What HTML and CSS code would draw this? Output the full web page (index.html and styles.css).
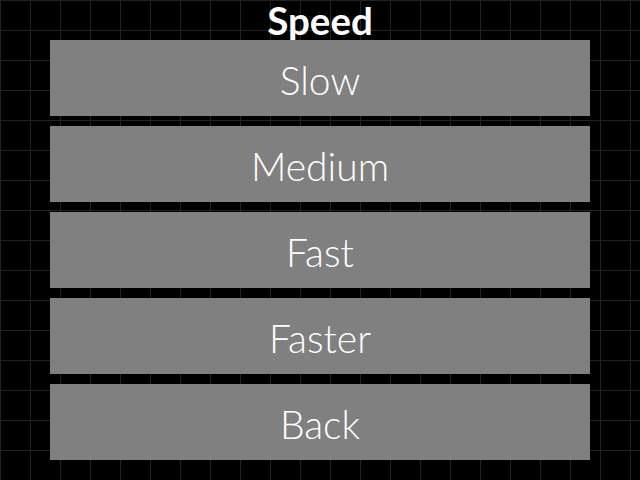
FILE: index.html
```html
<!DOCTYPE html>
<html>
<head>
<meta charset="utf-8">
<link rel="stylesheet" href="styles.css">
</head>
<body>
<div class="screen">
  <h1 class="title">Speed</h1>
  <div class="menu">
    <div class="item">Slow</div>
    <div class="item">Medium</div>
    <div class="item">Fast</div>
    <div class="item">Faster</div>
    <div class="item">Back</div>
  </div>
</div>
</body>
</html>
```
FILE: styles.css
```css
html, body {
  margin: 0;
  padding: 0;
}
body {
  width: 640px;
  height: 480px;
  overflow: hidden;
  background-color: #000;
  background-image:
    linear-gradient(#232323 1px, transparent 1px),
    linear-gradient(90deg, #232323 1px, transparent 1px);
  background-size: 30px 30px;
  font-family: "Lato", "Open Sans", sans-serif;
  color: #fff;
}
.screen {
  display: flex;
  flex-direction: column;
  align-items: center;
}
.title {
  margin: 0;
  height: 40px;
  font-size: 38.5px;
  font-weight: 700;
  line-height: 40px;
  text-align: center;
}
.menu {
  position: relative;
  display: flex;
  flex-direction: column;
  gap: 10px;
  width: 540px;
}
.item {
  box-sizing: border-box;
  height: 76px;
  padding-top: 4px;
  background: #808080;
  font-size: 39px;
  font-weight: 300;
  line-height: 72px;
  text-align: center;
}
```
